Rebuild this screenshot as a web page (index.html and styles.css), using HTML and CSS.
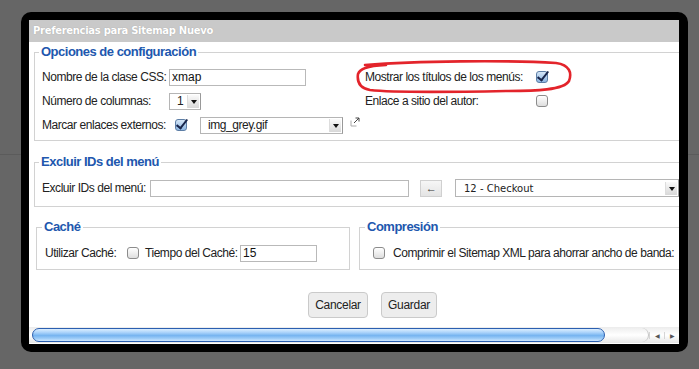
FILE: index.html
```html
<!DOCTYPE html>
<html lang="es">
<head>
    <meta charset="UTF-8">
    <title>Preferencias para Sitemap Nuevo</title>
    <link rel="stylesheet" href="styles.css">
</head>
<body>
<div class="screen">
    <div class="dialog">
        <div class="win">
            <div class="titlebar">Preferencias para Sitemap Nuevo</div>
            <div class="content">
                <fieldset class="box box-config">
                    <legend>Opciones de configuración</legend>
                    <div class="cols">
                        <div class="col col-left">
                            <div class="row">
                                <label class="lbl lbl-left">Nombre de la clase CSS:</label>
                                <input class="field field-css" value="xmap">
                            </div>
                            <div class="row">
                                <label class="lbl lbl-left">Número de columnas:</label>
                                <span class="select select-cols"><span class="select-text">1</span><span class="select-arrow"></span></span>
                            </div>
                            <div class="row">
                                <label class="lbl lbl-left">Marcar enlaces externos:</label>
                                <span class="check checked check-ext"></span>
                                <span class="select select-img"><span class="select-text">img_grey.gif</span><span class="select-arrow"></span></span>
                                <svg class="ext-icon" width="10" height="10" viewBox="0 0 10 10">
                                    <path d="M1 3.5 V9 H6.5" fill="none" stroke="#aaa" stroke-width="1"/>
                                    <path d="M4 6 L9 1 M5.5 1 H9 V4.5" fill="none" stroke="#444" stroke-width="1"/>
                                </svg>
                            </div>
                        </div>
                        <div class="col col-right">
                            <div class="row">
                                <label class="lbl lbl-right">Mostrar los títulos de los menús:</label>
                                <span class="check checked"></span>
                            </div>
                            <div class="row">
                                <label class="lbl lbl-right">Enlace a sitio del autor:</label>
                                <span class="check"></span>
                            </div>
                        </div>
                    </div>
                </fieldset>

                <fieldset class="box box-exclude">
                    <legend>Excluir IDs del menú</legend>
                    <div class="row">
                        <label class="lbl lbl-ids">Excluir IDs del menú:</label>
                        <input class="field field-ids" value="">
                        <span class="btn-arrow">&larr;</span>
                        <span class="select select-menu"><span class="select-text">12 - Checkout</span><span class="select-arrow"></span></span>
                    </div>
                </fieldset>

                <div class="pair">
                    <fieldset class="box box-cache">
                        <legend>Caché</legend>
                        <div class="row">
                            <label class="lbl lbl-use">Utilizar Caché:</label>
                            <span class="check"></span>
                            <label class="lbl lbl-time">Tiempo del Caché:</label>
                            <input class="field field-time" value="15">
                        </div>
                    </fieldset>
                    <fieldset class="box box-gzip">
                        <legend>Compresión</legend>
                        <div class="row">
                            <span class="check check-gzip"></span>
                            <label class="lbl">Comprimir el Sitemap XML para ahorrar ancho de banda:</label>
                        </div>
                    </fieldset>
                </div>

                <div class="actions">
                    <button class="btn btn-cancel">Cancelar</button>
                    <button class="btn btn-save">Guardar</button>
                </div>
            </div>
            <div class="hscroll">
                <span class="thumb"></span>
                <span class="track"></span>
                <span class="arrows"><span class="arr">&#9664;</span><span class="arr">&#9654;</span></span>
            </div>
        </div>
    </div>
    <svg class="mark" width="220" height="36" viewBox="0 0 220 36">
        <path d="M9 6 C60 2 150 1 200 4 C214 6 216 14 213 22 C208 31 180 32 150 32 C100 33 40 34 14 31 C3 29 1 22 2 15 C4 10 10 7 30 6"
              fill="none" stroke="#e3242b" stroke-width="2.6" stroke-linecap="round"/>
    </svg>
</div>
</body>
</html>
```

FILE: styles.css
```css
body {
    margin: 0;
    font-family: "Liberation Sans", Arial, sans-serif;
}

.screen {
    position: relative;
    height: 369px;
    padding: 12px 0 0 21px;
    box-sizing: border-box;
    background: linear-gradient(to bottom, #666 0, #666 154px, #5b5b5b 154px, #5b5b5b 155px, #666 155px);
}

.dialog {
    width: 667px;
    height: 340px;
    padding: 8px 9px 8px 8px;
    box-sizing: border-box;
    background: #000;
    border-radius: 10px;
}

.win {
    height: 100%;
    display: flex;
    flex-direction: column;
    background: #fff;
    overflow: hidden;
}

.titlebar {
    height: 22px;
    line-height: 22px;
    padding-left: 4px;
    background: #c9c9c9;
    color: #fff;
    font-family: "DejaVu Sans", Verdana, sans-serif;
    font-size: 10px;
    font-weight: bold;
    letter-spacing: -0.3px;
    text-shadow: 0 0 1px #9a9a9a;
}

.content {
    flex: 1;
    padding: 2px 0 0 5px;
}

fieldset {
    margin: 0;
    min-width: 0;
    border: 1px solid #d2d2d2;
}

legend {
    margin-left: -3px;
    padding: 0 2px;
    line-height: 16px;
    font-size: 13px;
    font-weight: bold;
    letter-spacing: -0.5px;
    color: #2157ae;
}

.row {
    display: flex;
    align-items: center;
    height: 24px;
    font-size: 12px;
    letter-spacing: -0.45px;
    color: #222;
    white-space: nowrap;
}

.box-config {
    width: 700px;
    padding: 5px 0 3px 7px;
}

.cols {
    display: flex;
}

.col-left {
    width: 323px;
}

.lbl-left {
    width: 127px;
}

.lbl-right {
    width: 171px;
}

.field {
    height: 17px;
    padding: 0 2px;
    box-sizing: border-box;
    border: 1px solid #b9b9b9;
    font-family: "Liberation Sans", Arial, sans-serif;
    font-size: 12px;
    color: #111;
    outline: none;
}

.field-css {
    width: 137px;
}

.select {
    display: flex;
    align-items: center;
    height: 17px;
    box-sizing: border-box;
    border: 1px solid #b5b5b5;
    border-right-color: #999;
    background: #fff;
}

.select-text {
    flex: 1;
    padding-left: 7px;
    font-size: 12px;
}

.select-arrow {
    width: 11px;
    height: 13px;
    margin-right: 1px;
    background: linear-gradient(to bottom, #fafafa, #d8d8d8);
    border-left: 1px solid #ddd;
    position: relative;
}

.select-arrow::after {
    content: "";
    position: absolute;
    left: 3px;
    top: 5px;
    border-left: 3px solid transparent;
    border-right: 3px solid transparent;
    border-top: 4px solid #111;
}

.select-cols {
    width: 32px;
}

.check-ext {
    margin-left: 6px;
}

.select-img {
    width: 143px;
    margin-left: 13px;
}

.ext-icon {
    margin-left: 7px;
    margin-top: -6px;
}

.check {
    display: inline-block;
    flex: none;
    width: 12px;
    height: 12px;
    box-sizing: border-box;
    border: 1px solid #8c8c8c;
    border-radius: 3px;
    background: linear-gradient(to bottom, #fff, #dedede);
    position: relative;
}

.check.checked {
    border-color: #5d7ea6;
    background: linear-gradient(to bottom, #d5e6f7, #8db6e2);
}

.check.checked::after {
    content: "";
    position: absolute;
    left: 3px;
    top: -3px;
    width: 4px;
    height: 10px;
    border-right: 2px solid #17244a;
    border-bottom: 2px solid #17244a;
    transform: rotate(38deg);
}

.box-exclude {
    width: 700px;
    margin-top: 13px;
    padding: 6px 0 6px 7px;
}

.lbl-ids {
    width: 108px;
}

.field-ids {
    width: 259px;
}

.btn-arrow {
    width: 22px;
    height: 17px;
    margin-left: 11px;
    box-sizing: border-box;
    border: 1px solid #d0d0d0;
    background: linear-gradient(to bottom, #f6f6f6, #e4e4e4);
    font-size: 11px;
    line-height: 15px;
    text-align: center;
    color: #333;
}

.select-menu {
    width: 224px;
    height: 18px;
    margin-left: 13px;
}

.select-menu .select-text {
    padding-left: 8px;
    font-family: "DejaVu Sans", sans-serif;
    font-size: 10px;
    letter-spacing: 0;
}

.pair {
    display: flex;
    margin-top: 12px;
}

.box-cache {
    flex: none;
    width: 314px;
    margin-left: 2px;
    box-sizing: border-box;
    padding: 6px 0 4px 8px;
}

.lbl-use {
    width: 82px;
}

.lbl-time {
    width: 95px;
    margin-left: 6px;
}

.field-time {
    width: 77px;
}

.box-gzip {
    flex: none;
    width: 340px;
    margin-left: 9px;
    padding: 6px 0 4px 13px;
}

.box-gzip legend {
    margin-left: -8px;
}

.check-gzip {
    margin-right: 8px;
}

.actions {
    display: flex;
    gap: 13px;
    margin-top: 22px;
    padding-left: 274px;
}

.btn {
    height: 26px;
    padding: 0;
    border: 1px solid #cacaca;
    border-radius: 4px;
    background: #ededed;
    font-family: "Liberation Sans", Arial, sans-serif;
    font-size: 12px;
    letter-spacing: -0.3px;
    color: #222;
}

.btn-cancel {
    width: 60px;
}

.btn-save {
    width: 56px;
}

.hscroll {
    display: flex;
    align-items: center;
    height: 16px;
    margin-bottom: 1px;
    padding-left: 3px;
    background: linear-gradient(to bottom, #ececec, #fff 50%, #e6e6e6);
}

.thumb {
    width: 573px;
    height: 14px;
    border: 1px solid #2b5fb0;
    border-radius: 8px;
    box-sizing: border-box;
    background: linear-gradient(to bottom, #dceeff 0, #a9d2fa 30%, #76b4f0 55%, #9fcdf8 80%, #cfe7ff 100%);
}

.track {
    flex: 1;
    height: 14px;
    border-right: 1px solid #c4c4c4;
    border-radius: 0 8px 8px 0;
}

.arrows {
    display: flex;
    width: 30px;
}

.arr {
    flex: 1;
    font-size: 6px;
    color: #555;
    text-align: center;
    border-left: 1px solid #d5d5d5;
}

.mark {
    position: absolute;
    left: 356px;
    top: 59px;
}
```
